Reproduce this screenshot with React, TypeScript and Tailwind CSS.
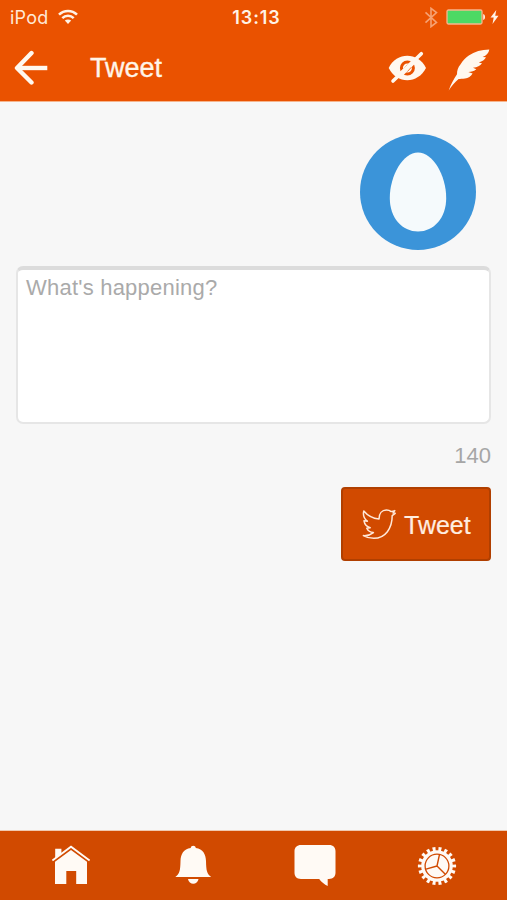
import React from "react";

const sans = "font-['Liberation_Sans',Arial,sans-serif]";
const inter = "font-[Inter,sans-serif]";

function StatusBar() {
  return (
    <div className={`grid h-[34px] grid-cols-3 items-center leading-none ${inter}`}>
      <div className="flex items-center pl-2.5 text-[#ffe9d6]">
        <span className="w-[39px] pt-px text-[18px] font-normal tracking-[0.2px]">iPod</span>
        <svg width="20" height="16" viewBox="0 0 20 16" className="ml-[9px]" fill="none" stroke="#fff3e6" strokeWidth="2.5">
          <path d="M1 5.7C6 .7 14 .7 19 5.7" />
          <path d="M4.3 9.1C7.4 6 12.6 6 15.7 9.1" />
          <path d="M10 15l-3.2-3.4c1.8-1.6 4.6-1.6 6.4 0z" fill="#fff3e6" stroke="none" />
        </svg>
      </div>
      <div className="pl-[6px] pt-px text-center text-[18px] font-semibold tracking-[0.9px] text-[#fff3e6]">13:13</div>
      <div className="flex items-center justify-end pr-[8px]">
        <svg width="14" height="21" viewBox="0 0 14 21" fill="none" stroke="#f6a273" strokeWidth="1.6">
          <path d="M1.5 5.3l11 10.2L7 19.7V1.3l5.5 4.2-11 10.2" />
        </svg>
        <svg width="40" height="16" viewBox="0 0 40 16" className="ml-[8px]">
          <rect x="1" y="1" width="35" height="14" rx="1.5" fill="#4cd964" stroke="#f8b58c" strokeWidth="1.3" />
          <path d="M37.2 5c2.4.6 2.4 5.4 0 6z" fill="#fff0e2" />
        </svg>
        <svg width="9" height="14" viewBox="0 0 9 14" className="ml-[4px]" fill="#fff3e6">
          <path d="M6.3 0L.5 7.6h3.2L2.5 14l6-8.2H5.2z" />
        </svg>
      </div>
    </div>
  );
}

function BackArrow() {
  return (
    <svg width="35" height="36" viewBox="0 0 35 36" fill="none" stroke="#fff8ef" strokeWidth="4.4">
      <path d="M18.5 3L4 18l14.5 14.5" strokeLinejoin="round" strokeLinecap="round" />
      <path d="M4 18H34.3" />
    </svg>
  );
}

function HiddenEye() {
  return (
    <svg width="40" height="36" viewBox="0 0 40 36">
      <path d="M.7 18C8.5 1.8 30 1.8 38 18C30 34.2 8.5 34.2 .7 18z" fill="#fff8ef" />
      <circle cx="19.4" cy="18" r="6" fill="none" stroke="#ea5200" strokeWidth="3" />
      <path d="M13 24.4L25.8 11.6" stroke="#fff8ef" strokeWidth="4.6" />
      <path d="M15.6 19L19.6 14.6M19.4 21.6L23.4 17.2" stroke="#ea5200" strokeWidth=".8" />
      <path d="M5 31L33.3 3.7" stroke="#fff8ef" strokeWidth="3.6" strokeLinecap="round" />
    </svg>
  );
}

function Feather() {
  return (
    <svg width="42" height="42" viewBox="0 0 42 42" fill="#fff8ef">
      <path d="M.7 41.4C2.8 35.4 5.7 30.3 9 25.3C9 21.5 10 18.3 12.6 15.3C15 11.5 17.6 8.8 20.8 6.6C26.4 2.7 33.6 .6 41.3.5C40.8 4.2 38.4 6.6 34.6 8L38 8.3C36.6 11 34.3 12.6 30.8 13.4L34 14.3C32.1 16.8 29.5 18.3 25 18.7L28.3 20.3C26.3 22.3 23.5 23 20.3 23L24.6 24.5C22.8 27.4 20.3 29.1 17 29.4C14.5 29.8 12 29.6 10.6 30C6.9 33.2 3.5 37.3.7 41.4z" />
    </svg>
  );
}

function EggAvatar() {
  return (
    <div className="flex size-[116px] items-center justify-center rounded-full bg-[#3b94d9]">
      <svg width="58" height="80" viewBox="0 0 58 80">
        <path d="M29 .5C44 .5 57.2 23.5 57.2 46C57.2 66 44.8 79.5 29 79.5S.8 66 .8 46C.8 23.5 14 .5 29 .5z" fill="#f5fafc" />
      </svg>
    </div>
  );
}

function Bird() {
  return (
    <svg width="34" height="31" viewBox="0 0 34 31" fill="none" stroke="#ffe8d8" strokeWidth="1.5" strokeLinejoin="round">
      <path d="M1.8 2C5.4 6.4 10.6 9.4 17 9.9C17 4.5 20 1 24.4 1C26.6 1 28 1.6 29.2 2.6L32.8 1.6L31 4L33.2 4.3L30.2 6.6C30.2 19.2 23.5 29.3 11.8 29.3C7.8 29.3 4.4 28.4 1.4 26.6C5.2 26.9 8.6 25.8 11.4 23.6C8.4 23.3 5.9 21.7 4.8 19.2L8.2 18.7C4.8 17.6 2.5 15 2 11.8L5.4 12.2C2 9.5.8 5.9 1.8 2z" />
    </svg>
  );
}

function Home() {
  return (
    <svg width="40" height="42" viewBox="0 0 40 42" fill="#fffaf5">
      <path d="M4.2 3.8h6.2v5L4.2 13.5z" />
      <path d="M1.4 15.4L20 1.8l18.6 13.6" fill="none" stroke="#fffaf5" strokeWidth="1.9" />
      <path d="M4 16.8L20 5l16 11.8V39H25.2V26H15.3V39H4z" />
    </svg>
  );
}

function Bell() {
  return (
    <svg width="38" height="42" viewBox="0 0 38 42" fill="#fffaf5">
      <path d="M15.7 3C16 .1 20.5.1 20.8 3C28 4.2 30.8 9 31 16C31.2 25.5 31.8 28.8 36.2 32H.3C4.7 28.8 5.3 25.5 5.5 16C5.7 9 8.5 4.2 15.7 3z" />
      <path d="M13 34H23.5C22.6 40.3 13.9 40.3 13 34z" />
    </svg>
  );
}

function Chat() {
  return (
    <svg width="42" height="44" viewBox="0 0 42 44" fill="#fffaf5">
      <path d="M7 1H35C39.4 1 41.5 3.6 41.5 7.2V28.8C41.5 32.6 39 35 35 35H33.7V42C30.5 40.6 27.4 38 25.2 35H7C2.6 35 .5 32.4.5 28.8V7.2C.5 3.4 3 1 7 1z" />
    </svg>
  );
}

function Gear() {
  return (
    <svg width="40" height="40" viewBox="0 0 40 40" fill="none">
      <circle cx="20" cy="20" r="17" stroke="#fffaf5" strokeWidth="4.2" pathLength="180" strokeDasharray="5 5" strokeDashoffset="2.5" />
      <circle cx="20" cy="20" r="15.8" fill="#fffaf5" />
      <circle cx="20" cy="20" r="11.9" stroke="#d14a00" strokeWidth="1.3" />
      <path d="M20 20L22.5 8.4M20 20L9 23.2M20 20L28.3 28.3" stroke="#d14a00" strokeWidth="1.4" />
    </svg>
  );
}

export default function App() {
  return (
    <div className={`flex h-[900px] w-[507px] flex-col overflow-hidden bg-[#f7f7f7] ${sans}`}>
      <header className="h-[102px] shrink-0 border-b border-[#f6b48c] bg-[#ea5200]">
        <StatusBar />
        <div className="flex h-[67px] items-center pl-[13px] pr-[17px]">
          <BackArrow />
          <h1 className="ml-[42px] grow text-[27px] leading-8 text-[#fff5e9] [-webkit-text-stroke:0.35px_#fff5e9]">Tweet</h1>
          <HiddenEye />
          <div className="ml-5 mt-[5px] flex">
            <Feather />
          </div>
        </div>
      </header>

      <main className="flex grow flex-col items-end px-4 pt-8">
        <div className="mr-[15px]">
          <EggAvatar />
        </div>
        <textarea
          placeholder="What's happening?"
          className="mt-4 block h-[158px] w-full resize-none rounded-[7px] border-2 border-t-4 border-[#e6e6e6] border-t-[#dcdcdc] bg-white px-2 pt-1 text-[22px] leading-[28px] tracking-[0.22px] outline-none placeholder:text-[#aaaaaa]"
        />
        <span className="mt-[18px] text-[22px] leading-7 text-[#a6a6a6]">140</span>
        <button className="mt-[17px] flex h-[74px] w-[150px] items-center rounded-[4px] border-2 border-[#b03f00] bg-[#d14a00] pl-[19px] text-[25px] text-[#ffeee0]">
          <Bird />
          <span className="ml-2 mt-[3px] [-webkit-text-stroke:0.2px_#ffeee0]">Tweet</span>
        </button>
      </main>

      <nav className="flex h-[70px] shrink-0 items-center border-t border-[#f0c9b0] bg-[#d14a00] pl-[51px] pr-[50px]">
        <div className="flex w-[124px]"><Home /></div>
        <div className="flex w-[119px]"><Bell /></div>
        <div className="flex w-[123px]"><Chat /></div>
        <Gear />
      </nav>
    </div>
  );
}
